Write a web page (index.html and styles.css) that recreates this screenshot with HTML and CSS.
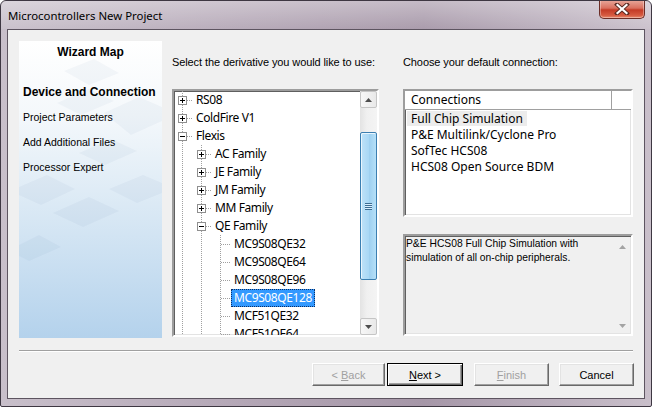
FILE: index.html
```html
<!DOCTYPE html>
<html>
<head>
<meta charset="utf-8">
<link rel="stylesheet" href="styles.css">
</head>
<body>
<div class="window">
  <div class="titlebar">
    <span class="title">Microcontrollers New Project</span>
    <div class="close">
      <svg width="16" height="12" viewBox="0 0 16 12">
        <path d="M3 1.5 L13 10.5 M13 1.5 L3 10.5" stroke="#5a2a22" stroke-width="4" stroke-linecap="square"/>
        <path d="M3.5 2 L12.5 10 M12.5 2 L3.5 10" stroke="#ffffff" stroke-width="2.2" stroke-linecap="square"/>
      </svg>
    </div>
  </div>
  <div class="client">
    <div class="main">
      <div class="wizard">
        <div class="wiz-title">Wizard Map</div>
        <div class="wiz-step current">Device and Connection</div>
        <div class="wiz-step">Project Parameters</div>
        <div class="wiz-step">Add Additional Files</div>
        <div class="wiz-step">Processor Expert</div>
      </div>

      <div class="col col-tree">
        <div class="label">Select the derivative you would like to use:</div>
        <div class="tree sunken">
          <div class="tree-rows">
            <div class="row"><span class="u node"><i class="exp plus"></i></span><span class="txt">RS08</span></div>
            <div class="row"><span class="u node"><i class="exp plus"></i></span><span class="txt">ColdFire V1</span></div>
            <div class="row"><span class="u node"><i class="exp minus"></i></span><span class="txt">Flexis</span></div>
            <div class="row"><span class="u line"></span><span class="u node"><i class="exp plus"></i></span><span class="txt">AC Family</span></div>
            <div class="row"><span class="u line"></span><span class="u node"><i class="exp plus"></i></span><span class="txt">JE Family</span></div>
            <div class="row"><span class="u line"></span><span class="u node"><i class="exp plus"></i></span><span class="txt">JM Family</span></div>
            <div class="row"><span class="u line"></span><span class="u node"><i class="exp plus"></i></span><span class="txt">MM Family</span></div>
            <div class="row"><span class="u line"></span><span class="u node"><i class="exp minus"></i></span><span class="txt">QE Family</span></div>
            <div class="row"><span class="u line"></span><span class="u line"></span><span class="u node"></span><span class="txt">MC9S08QE32</span></div>
            <div class="row"><span class="u line"></span><span class="u line"></span><span class="u node"></span><span class="txt">MC9S08QE64</span></div>
            <div class="row"><span class="u line"></span><span class="u line"></span><span class="u node"></span><span class="txt">MC9S08QE96</span></div>
            <div class="row"><span class="u line"></span><span class="u line"></span><span class="u node"></span><span class="txt sel">MC9S08QE128</span></div>
            <div class="row"><span class="u line"></span><span class="u line"></span><span class="u node"></span><span class="txt">MCF51QE32</span></div>
            <div class="row"><span class="u line"></span><span class="u line"></span><span class="u node"></span><span class="txt">MCF51QE64</span></div>
          </div>
          <div class="vscroll">
            <div class="sbtn"><svg width="7" height="4" viewBox="0 0 7 4"><path d="M0 4 L3.5 0 L7 4Z" fill="#4d4d4d"/></svg></div>
            <div class="strack">
              <div class="thumb"><span class="grip"></span></div>
            </div>
            <div class="sbtn"><svg width="7" height="4" viewBox="0 0 7 4"><path d="M0 0 L3.5 4 L7 0Z" fill="#4d4d4d"/></svg></div>
          </div>
        </div>
      </div>

      <div class="col col-conn">
        <div class="label">Choose your default connection:</div>
        <div class="list sunken">
          <div class="lv-head">
            <span class="lv-col">Connections</span>
            <span class="lv-rest"></span>
          </div>
          <div class="lv-row"><span class="lv-item hot">Full Chip Simulation</span></div>
          <div class="lv-row"><span class="lv-item">P&amp;E Multilink/Cyclone Pro</span></div>
          <div class="lv-row"><span class="lv-item">SofTec HCS08</span></div>
          <div class="lv-row"><span class="lv-item">HCS08 Open Source BDM</span></div>
        </div>
        <div class="desc sunken">
          <div class="desc-text">P&amp;E HCS08 Full Chip Simulation with<br>simulation of all on-chip peripherals.</div>
          <div class="desc-scroll">
            <svg width="7" height="4" viewBox="0 0 7 4"><path d="M0 4 L3.5 0 L7 4Z" fill="#a3a3a3"/></svg>
            <svg width="7" height="4" viewBox="0 0 7 4"><path d="M0 0 L3.5 4 L7 0Z" fill="#a3a3a3"/></svg>
          </div>
        </div>
      </div>
    </div>

    <div class="sep"></div>

    <div class="buttons">
      <button class="btn back" disabled>&lt; <u>B</u>ack</button>
      <button class="btn next default"><u>N</u>ext &gt;</button>
      <button class="btn finish" disabled><u>F</u>inish</button>
      <button class="btn cancel">Cancel</button>
    </div>
  </div>
</div>
</body>
</html>
```

FILE: styles.css
```css
* { box-sizing: border-box; }

html, body {
  margin: 0;
  padding: 0;
  background: #ffffff;
}

body {
  font-family: "Liberation Sans", Arial, sans-serif;
  font-size: 11px;
  color: #000;
}

.window {
  width: 652px;
  height: 407px;
  border: 1px solid #3e3742;
  border-radius: 6px 6px 2px 2px;
  background: linear-gradient(to right, #c8bfca 0%, #b5a8b7 35%, #a697a8 65%, #b9adbb 85%, #c9bfca 100%);
  display: flex;
  flex-direction: column;
  overflow: hidden;
}

.titlebar {
  height: 28px;
  display: flex;
  align-items: flex-start;
  justify-content: space-between;
  padding-left: 7px;
  padding-right: 6px;
  background: linear-gradient(to bottom, rgba(255,255,255,0.35), rgba(255,255,255,0.05));
}

.title {
  font-family: "Noto Sans", "Open Sans", sans-serif;
  font-size: 11.4px;
  line-height: 14px;
  margin-top: 8px;
  color: #000;
}

.close {
  width: 46px;
  height: 19px;
  margin-top: -1px;
  border: 1px solid #6b2d26;
  border-top: none;
  border-radius: 0 0 5px 5px;
  background: linear-gradient(to bottom, #e8a99c 0%, #d9705f 45%, #c43b26 55%, #d65a40 85%, #e68a6e 100%);
  box-shadow: inset 0 0 0 1px rgba(255,255,255,0.35);
  display: flex;
  align-items: center;
  justify-content: center;
}

.client {
  flex: 1;
  margin: 0 6px 7px 6px;
  border: 1px solid #5d5460;
  background: #f0f0f0;
  display: flex;
  flex-direction: column;
  padding: 11px 10px 0 11px;
}

.main {
  display: flex;
  height: 297px;
}

/* Wizard map panel */
.wizard {
  width: 143px;
  height: 297px;
  background-image:
    url("data:image/svg+xml,%3Csvg xmlns='http://www.w3.org/2000/svg' width='143' height='297'%3E%3Cg fill='%23003366' fill-opacity='0.035'%3E%3Cpath d='M45 30 L75 18 L100 32 L70 44Z'/%3E%3Cpath d='M85 72 L120 56 L143 66 L143 80 L112 94Z'/%3E%3Cpath d='M38 62 L70 48 L95 60 L62 74Z'/%3E%3Cpath d='M90 148 L124 134 L143 142 L143 152 L118 162Z'/%3E%3Cpath d='M0 146 L28 134 L56 148 L22 164 L0 154Z'/%3E%3Cpath d='M34 172 L70 156 L100 170 L64 186Z'/%3E%3Cpath d='M0 204 L20 194 L42 206 L10 220 L0 215Z'/%3E%3Cpath d='M60 112 L92 98 L118 110 L86 124Z'/%3E%3C/g%3E%3C/svg%3E"),
    linear-gradient(to bottom, #ffffff 0%, #f4f8fb 25%, #d7e7f4 60%, #b4d2ec 100%);
  display: flex;
  flex-direction: column;
  padding: 4px 0 0 4px;
}

.wiz-title {
  font-weight: bold;
  font-size: 12px;
  line-height: 14px;
  text-align: center;
  padding-right: 4px;
  margin-bottom: 26px;
}

.wiz-step {
  font-size: 10.5px;
  line-height: 14px;
  margin-bottom: 11px;
  color: #000;
}

.wiz-step.current {
  font-weight: bold;
  font-size: 12px;
}

.col {
  display: flex;
  flex-direction: column;
}

.label {
  font-size: 11px;
  letter-spacing: -0.1px;
  line-height: 13px;
  margin-top: 15px;
  margin-bottom: 20px;
  white-space: nowrap;
}

.col-tree {
  margin-left: 10px;
  width: 207px;
}

.col-conn {
  margin-left: 24px;
  width: 230px;
}

.sunken {
  border-style: solid;
  border-width: 2px;
  border-color: #9d9d9d #ffffff #ffffff #9d9d9d;
  box-shadow: inset 1px 1px 0 #5f5f5f, inset -1px -1px 0 #e3e3e3;
}

/* Tree */
.tree {
  height: 248px;
  background: #fff;
  display: flex;
  overflow: hidden;
}

.tree-rows {
  flex: 1;
  display: flex;
  flex-direction: column;
  font-family: "Noto Sans", "Open Sans", sans-serif;
  font-size: 12px;
  letter-spacing: -0.4px;
  overflow: hidden;
}

.row {
  height: 18px;
  flex: none;
  display: flex;
  align-items: stretch;
  white-space: nowrap;
}

.u {
  width: 19px;
  height: 18px;
  flex: none;
  position: relative;
}

.u.line::before,
.u.node::before {
  content: "";
  position: absolute;
  left: 8px;
  top: 0;
  width: 1px;
  height: 18px;
  background: repeating-linear-gradient(to bottom, #a0a0a0 0 1px, transparent 1px 2px);
}

.u.node::after {
  content: "";
  position: absolute;
  left: 9px;
  top: 9px;
  width: 10px;
  height: 1px;
  background: repeating-linear-gradient(to right, #a0a0a0 0 1px, transparent 1px 2px);
}

.exp {
  position: absolute;
  left: 4px;
  top: 5px;
  width: 9px;
  height: 9px;
  border: 1px solid #8f8f8f;
  background: #fff;
  z-index: 1;
}

.exp::before {
  content: "";
  position: absolute;
  left: 1px;
  top: 3px;
  width: 5px;
  height: 1px;
  background: #000;
}

.exp.plus::after {
  content: "";
  position: absolute;
  left: 3px;
  top: 1px;
  width: 1px;
  height: 5px;
  background: #000;
}

.txt {
  padding: 0 2px 1px 2px;
  line-height: 15px;
  height: 18px;
  border: 1px dotted transparent;
  color: #000;
}

.txt.sel {
  background: #3399ff;
  color: #fff;
  border-color: #0a2f66;
}

.vscroll {
  width: 17px;
  flex: none;
  display: flex;
  flex-direction: column;
  background: linear-gradient(to right, #e3e3e3, #f0f0f0 40%, #f4f4f4);
}

.sbtn {
  height: 17px;
  flex: none;
  border: 1px solid #c5c5c5;
  border-radius: 2px;
  background: linear-gradient(to right, #f7f7f7, #e9e9e9);
  display: flex;
  align-items: center;
  justify-content: center;
}

.strack {
  flex: 1;
  display: flex;
  flex-direction: column;
  padding-top: 24px;
  padding-bottom: 38px;
}

.thumb {
  flex: 1;
  border: 1px solid #3c7fb1;
  border-radius: 2px;
  background: linear-gradient(to right, #bfe2f8 0%, #aad8f5 50%, #9ccff0 51%, #b6e0f8 100%);
  box-shadow: inset 1px 1px 0 #e9f6fe;
  display: flex;
  align-items: center;
  justify-content: center;
}

.grip {
  width: 7px;
  height: 7px;
  background: repeating-linear-gradient(to bottom, #3c6c92 0 1px, #d8efff 1px 2px);
}

/* Connections list */
.list {
  height: 128px;
  background: #fff;
  display: flex;
  flex-direction: column;
}

.lv-head {
  height: 19px;
  flex: none;
  display: flex;
  font-family: "Noto Sans", "Open Sans", sans-serif;
  font-size: 12px;
  border-bottom: 1px solid #a0a0a0;
}

.lv-col {
  width: 207px;
  padding-left: 6px;
  line-height: 18px;
  border-right: 1px solid #a0a0a0;
  background: #fff;
}

.lv-rest {
  flex: 1;
  background: #fff;
}

.lv-row {
  height: 16px;
  flex: none;
  display: flex;
  align-items: center;
  padding-left: 2px;
  font-family: "Noto Sans", "Open Sans", sans-serif;
  font-size: 12px;
}

.lv-row:first-of-type {
  margin-top: 1px;
}

.lv-item {
  padding: 0 4px;
  line-height: 15px;
  white-space: nowrap;
}

.lv-item.hot {
  background: #ececec;
}

/* description */
.desc {
  margin-top: 17px;
  height: 102px;
  background: #f0f0f0;
  display: flex;
}

.desc-text {
  flex: 1;
  font-size: 10.3px;
  line-height: 14px;
  padding: 1px 0 0 1px;
  white-space: nowrap;
}

.desc-scroll {
  width: 17px;
  flex: none;
  display: flex;
  flex-direction: column;
  justify-content: space-between;
  align-items: center;
  padding: 9px 0 6px 0;
}

/* separator & buttons */
.sep {
  margin-top: 12px;
  height: 2px;
  border-top: 1px solid #a0a0a0;
  border-bottom: 1px solid #ffffff;
  margin-right: 1px;
}

.buttons {
  display: flex;
  justify-content: flex-end;
  margin-top: 11px;
}

.btn {
  font-family: "Liberation Sans", Arial, sans-serif;
  font-size: 11px;
  height: 23px;
  width: 75px;
  padding: 0;
  background: #f0f0f0;
  border-style: solid;
  border-width: 1px;
  border-color: #ffffff #696969 #696969 #ffffff;
  box-shadow: inset -1px -1px 0 #a0a0a0, inset 1px 1px 0 #e3e3e3;
  color: #000;
}

.btn[disabled] {
  color: #a0a0a0;
}

.btn u {
  text-decoration: underline;
}

.btn.back {
  width: 73px;
}

.btn.next {
  margin-left: 2px;
  width: 76px;
  border: 1px solid #000;
  box-shadow: inset 1px 1px 0 #ffffff, inset -1px -1px 0 #696969, inset -2px -2px 0 #a0a0a0;
}

.btn.finish {
  margin-left: 11px;
}

.btn.cancel {
  margin-left: 10px;
}
```
